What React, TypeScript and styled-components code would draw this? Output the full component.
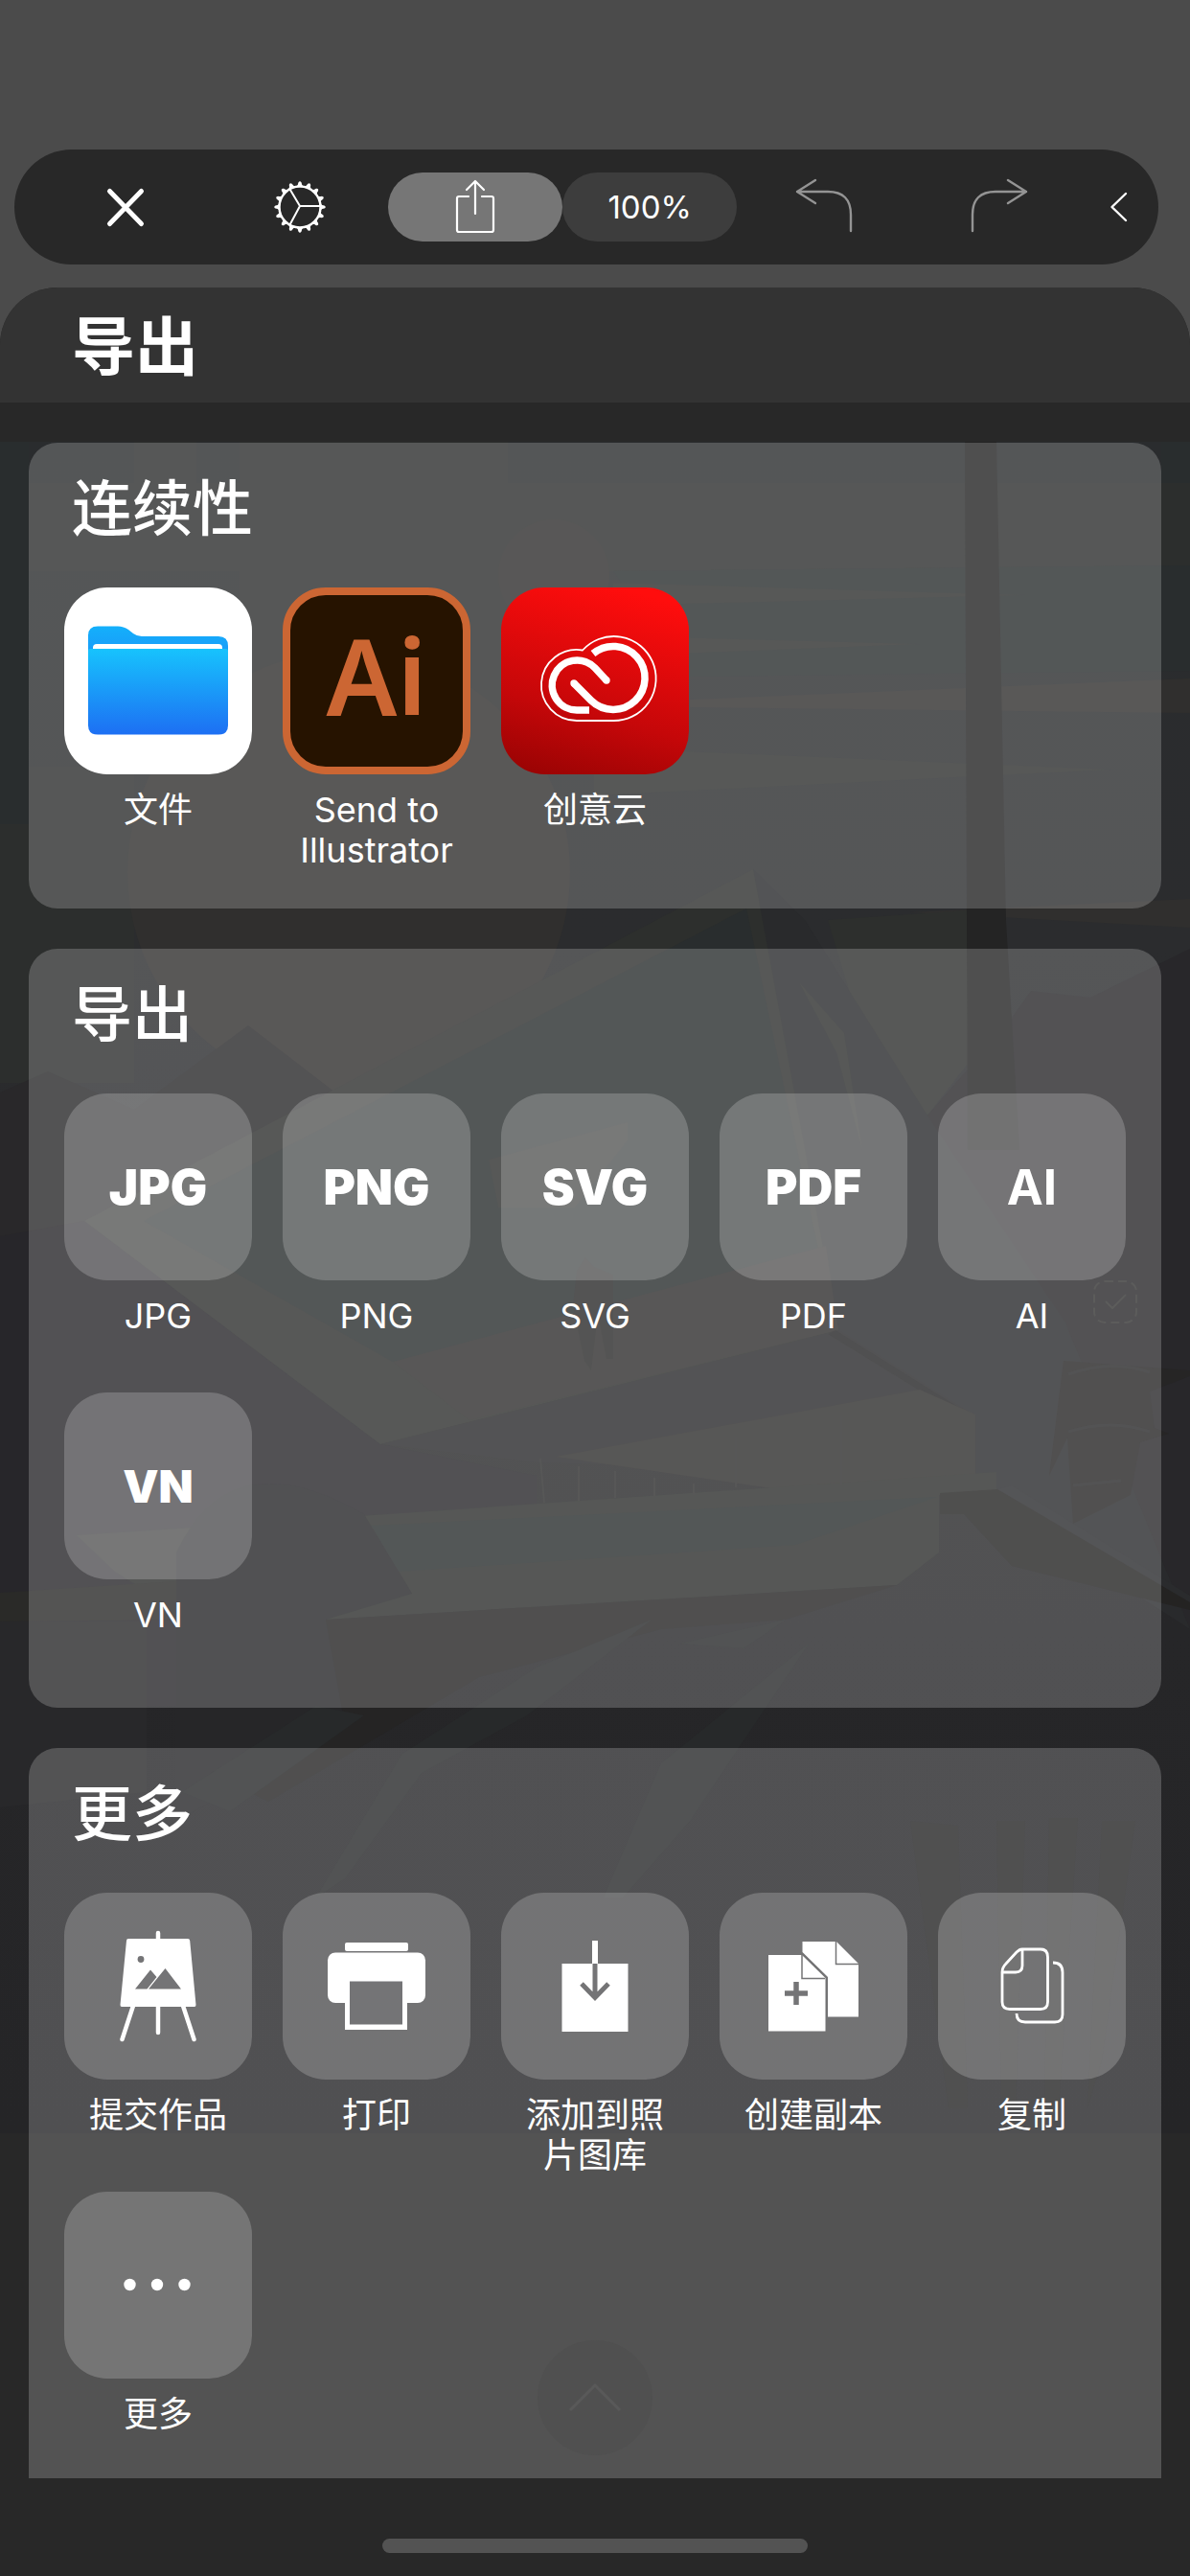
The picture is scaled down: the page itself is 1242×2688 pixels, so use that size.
import React from "react";
import styled, { createGlobalStyle } from "styled-components";

const GlobalStyle = createGlobalStyle`
  * { box-sizing: border-box; }
  body {
    margin: 0;
    background: #4b4b4b;
    color: #fff;
    font-family: Inter, "Noto Sans CJK SC", sans-serif;
  }
  button {
    margin: 0;
    padding: 0;
    border: 0;
    background: none;
    color: inherit;
    font: inherit;
    cursor: pointer;
  }
  h1, h2 { margin: 0; }
`;

const Page = styled.div`
  display: flex;
  flex-direction: column;
  height: 100vh;
  padding-top: 156px;
`;

const Toolbar = styled.header`
  display: grid;
  grid-template-columns: repeat(6, 1fr) 69px;
  align-items: center;
  flex: none;
  height: 120px;
  margin: 0 33px 24px 15px;
  padding: 0 6px 0 25px;
  border-radius: 60px;
  background: #282828;
`;

const ToolButton = styled.button<{ $fill?: string }>`
  display: flex;
  align-items: center;
  justify-content: center;
  height: 72px;
  border-radius: 36px;
  background: ${(p) => p.$fill ?? "transparent"};
  font-size: 33px;
`;

const Sheet = styled.main`
  display: flex;
  flex-direction: column;
  flex: 1;
  min-height: 0;
  overflow: hidden;
  border-radius: 60px 60px 0 0;
  background: #282828;
`;

const SheetHeader = styled.div`
  display: flex;
  align-items: center;
  flex: none;
  height: 120px;
  padding: 4px 75px 0;
  background: #333;
`;

const SheetTitle = styled.h1`
  font-size: 66px;
  line-height: 72px;
  font-weight: 700;
`;

const SheetBody = styled.div`
  position: relative;
  flex: 1;
  min-height: 0;
  overflow: hidden;
`;

const Backdrop = styled.svg`
  position: absolute;
  top: 41px;
  left: 0;
  width: 100%;
  height: auto;
`;

const Scroller = styled.div`
  position: relative;
  display: flex;
  flex-direction: column;
  gap: 42px;
  height: 100%;
  padding: 42px 30px;
  overflow-y: auto;
  scrollbar-width: none;
`;

const Card = styled.section<{ $bottom: number }>`
  flex: none;
  padding: 32px 37px ${(p) => p.$bottom}px;
  border-radius: 30px;
  background: rgba(255, 255, 255, 0.2);
`;

const CardTitle = styled.h2`
  margin: 0 8px 47px;
  font-size: 63px;
  line-height: 72px;
  font-weight: 500;
`;

const Grid = styled.div`
  display: grid;
  grid-template-columns: repeat(auto-fill, 196px);
  grid-auto-rows: 312px;
  column-gap: 32px;
  align-items: start;
`;

const Item = styled.button`
  display: flex;
  flex-direction: column;
  align-items: center;
  gap: 16px;
`;

const Tile = styled.span<{ $fill?: string; $edge?: string }>`
  display: flex;
  align-items: center;
  justify-content: center;
  width: 196px;
  height: 195px;
  overflow: hidden;
  border: ${(p) => (p.$edge ? `8px solid ${p.$edge}` : "0")};
  border-radius: 45px;
  background: ${(p) => p.$fill ?? "rgba(255, 255, 255, 0.2)"};
`;

const Label = styled.span`
  padding: 0 10px;
  font-size: 36px;
  line-height: 42px;
`;

const Format = styled.span<{ $weight: number; $size: number }>`
  font-size: ${(p) => p.$size}px;
  line-height: 60px;
  font-weight: ${(p) => p.$weight};
`;

const AppMark = styled.span`
  padding-bottom: 14px;
  color: #cc6633;
  font-family: "Noto Sans", sans-serif;
  font-size: 110px;
  line-height: 120px;
  font-weight: 600;
`;

const Footer = styled.footer`
  display: flex;
  justify-content: center;
  flex: none;
  height: 102px;
  padding-top: 63px;
`;

const HomeBar = styled.div`
  width: 444px;
  height: 15px;
  border-radius: 8px;
  background: #535353;
`;

/* ---------- toolbar icons ---------- */

const line = {
  fill: "none",
  stroke: "#fff",
  strokeLinecap: "round" as const,
  strokeLinejoin: "round" as const,
};

const CloseIcon = () => (
  <svg width="60" height="60" viewBox="0 0 60 60" {...line} strokeWidth="5">
    <path d="M13.500 13.500L46.500 47.500M46.500 13.500L13.500 47.500" />
  </svg>
);

const GearIcon = () => (
  <svg width="60" height="60" viewBox="-30 -30 60 60">
    {Array.from({ length: 16 }, (_, i) => (
      <path
        key={i}
        d="M-3.600 -21.500Q-1.800 -23 -1.600 -25.500Q0 -28 1.600 -25.500Q1.800 -23 3.600 -21.500Z"
        fill="#fff"
        transform={`rotate(${i * 22.5})`}
      />
    ))}
    <circle r="21.500" fill="none" stroke="#fff" strokeWidth="2.400" />
    <path d="M0 -1H21M0 -1L-11 -19.500M0 -1L-11 19.500" fill="none" stroke="#fff" strokeWidth="2" />
  </svg>
);

const ShareIcon = () => (
  <svg width="60" height="72" viewBox="0 0 60 72" {...line} strokeWidth="2.200">
    <path d="M23 25H13Q11 25 11 27V60Q11 62 13 62H47Q49 62 49 60V27Q49 25 47 25H37" />
    <path d="M30 43V9M21 18L30 9L39 18" />
  </svg>
);

const UndoIcon = ({ flip = false }: { flip?: boolean }) => (
  <svg width="60" height="60" viewBox="0 0 60 60" {...line} stroke="#949494" strokeWidth="2.400">
    <path
      d="M58 55V38Q58 14 34 14H2M21 2L2 14L21 26"
      transform={flip ? "translate(60 0) scale(-1 1)" : undefined}
    />
  </svg>
);

const BackIcon = () => (
  <svg width="30" height="40" viewBox="0 0 30 40" {...line} strokeWidth="2.400">
    <path d="M22 6L7.500 20L22 34" />
  </svg>
);

/* ---------- tile pictures, each on a 196 x 195 field ---------- */

const Picture = ({ children }: { children: React.ReactNode }) => (
  <svg width="196" height="195" viewBox="0 0 196 195" fill="#fff">
    {children}
  </svg>
);

const hole = "#747476";

const FolderPicture = () => (
  <Picture>
    <defs>
      <linearGradient id="folderBack" x1="0" y1="0" x2="0" y2="1">
        <stop offset="0" stopColor="#14b0fb" />
        <stop offset="1" stopColor="#1a96f8" />
      </linearGradient>
      <linearGradient id="folderFront" x1="0" y1="0" x2="0" y2="1">
        <stop offset="0" stopColor="#17c3fd" />
        <stop offset="1" stopColor="#1d6ff3" />
      </linearGradient>
    </defs>
    <path
      d="M25 75V50Q25 40.500 35 40.500H56Q62 40.500 67 44L72 48Q76 51 81 51H161Q171 51 171 61V75Z"
      fill="url(#folderBack)"
    />
    <path d="M30 66V63Q30 59 34 59H161Q165 59 165 63V66Z" />
    <path
      d="M25 66Q25 64 27 64H169Q171 64 171 66V144Q171 153.500 161 153.500H35Q25 153.500 25 144Z"
      fill="url(#folderFront)"
    />
  </Picture>
);

const CloudPicture = () => (
  <Picture>
    <g fill="none" stroke="#fff">
      <path d="M79 139A37 37 0 1 1 85 65.500A44 44 0 1 1 117 139Z" strokeWidth="1.800" />
      <path d="M96 69A33 33 0 1 1 94 118L76 100" strokeWidth="7.500" strokeLinejoin="round" />
      <path d="M110 97L98 84A26 26 0 1 0 79 128H92" strokeWidth="7.500" strokeLinejoin="round" />
    </g>
    <circle cx="76" cy="100" r="3.700" />
    <circle cx="110" cy="97" r="3.700" />
  </Picture>
);

const EaselPicture = () => (
  <Picture>
    <path d="M67 48H129Q131 48 131.200 50L137.500 117Q137.500 119 136 119H60Q58.500 119 58.500 117L65 50Q65 48 67 48Z" />
    <path
      d="M98 42V50M98 118V146M72 118L60.500 153M124 118L135.500 153"
      fill="none"
      stroke="#fff"
      strokeWidth="4.500"
      strokeLinecap="round"
    />
    <circle cx="80" cy="69.500" r="3.400" fill={hole} />
    <path d="M74 100.500L90 80.500L96.500 88L86.500 100.500ZM88 100.500L105.500 79L122 100.500Z" fill={hole} />
  </Picture>
);

const PrinterPicture = () => (
  <Picture>
    <rect x="65" y="52" width="66" height="9" rx="2" />
    <rect x="47" y="62.500" width="102" height="52.500" rx="8" />
    <rect x="65" y="90" width="65" height="53" />
    <rect x="70" y="92.500" width="55" height="45" fill={hole} />
  </Picture>
);

const AddPhotoPicture = () => (
  <Picture>
    <rect x="63.500" y="74" width="69" height="71" />
    <rect x="95" y="50" width="6" height="24" />
    <path d="M98 74V108M84 95L98 109.500L112 95" fill="none" stroke={hole} strokeWidth="5" />
  </Picture>
);

const DuplicatePicture = () => (
  <Picture>
    <path d="M86.500 51H122L145 74V129.500H113V88L86.500 62Z" />
    <path d="M121.500 51V74.500H145" fill="none" stroke={hole} strokeWidth="1.500" />
    <path d="M51 65H86L110.500 89V144.500H51Z" />
    <path d="M86 65V89.500H110" fill="none" stroke={hole} strokeWidth="1.500" />
    <path d="M80 93V117M68 105H92" fill="none" stroke={hole} strokeWidth="5.500" />
  </Picture>
);

const CopyPicture = () => (
  <Picture>
    <g fill="none" stroke="#fff" strokeWidth="2.800">
      <path d="M88 59H107Q114.500 59 114.500 67V114Q114.500 121.500 107 121.500H75Q67 121.500 67 114V83Q67 78 71 74L82 62Q85 59 88 59Z" />
      <path d="M88 59V76Q88 83 81 83H67" />
      <path d="M120 73Q130 73 130 83V127Q130 135 122 135H91Q82 135 82 126" />
    </g>
  </Picture>
);

const MorePicture = () => (
  <Picture>
    <circle cx="68.500" cy="97" r="6.200" />
    <circle cx="97" cy="97" r="6.200" />
    <circle cx="125.500" cy="97" r="6.200" />
  </Picture>
);

/* Dimmed canvas that shows through the sheet. */
const Artwork = () => (
  <Backdrop viewBox="0 461 1242 2125" aria-hidden="true">
    <defs>
      <linearGradient id="sky" x1="0" y1="0" x2="0" y2="1">
        <stop offset="0" stopColor="#2a2c2e" />
        <stop offset="0.300" stopColor="#2b2c2e" />
        <stop offset="0.700" stopColor="#262628" />
        <stop offset="1" stopColor="#252527" />
      </linearGradient>
    </defs>
    <rect y="461" width="1242" height="1765" fill="url(#sky)" />
    <path d="M140 461H205V504H140ZM250 461H530V800H250ZM635 504H1242V590L635 596ZM0 504H635V596H0ZM0 800H140V1130H0Z" fill="#2c2e2d" />
    <path d="M0 461H30V860H0ZM640 596L1242 590V700L720 706ZM1212 461H1242V504H1212Z" fill="#292d2e" />
    <path d="M640 608L1070 621L640 632ZM660 664L960 672L660 684ZM620 780L1160 803L620 830Z" fill="#2d2f2d" />
    <path d="M720 730L1242 708V744L720 738ZM950 952L1242 938V968Z" fill="#302f2e" />
    <circle cx="578" cy="600" r="58" fill="#2f2e2d" />
    <circle cx="364" cy="910" r="231" fill="#302f2e" />
    <path d="M864 960L1010 950V1110L968 1164L900 1080Z" fill="#2d2f2d" />
    <path d="M0 1140L50 1118L140 1158L259 1070L350 1140L300 1400L0 1640Z" fill="#29282a" />
    <path d="M0 1290L88 1274L397 1507L560 1540V1600L380 1780H0Z" fill="#27262a" />
    <path d="M968 1164L1010 1116L1056 1062L1076 1034L1138 1041L1242 990V1700L1112 1520Z" fill="#28272a" />
    <path d="M1007 461H1040L1050 961L1064 1200H1010Z" fill="#242424" />
    <path d="M786 907L840 960L968 1164L1112 1380L1242 1700L900 1480L870 1390Z" fill="#292a2c" />
    <path d="M88 1274L786 907L875 1388L397 1507Z" fill="#2d2f2d" />
    <path d="M150 1274L779 948L862 1342L410 1421Z" fill="#292d2e" />
    <path d="M410 1421L862 1300L875 1388L490 1482Z" fill="#2f2e2d" />
    <path d="M510 1210L655 1171V1190L600 1260H520Z" fill="#2d2f2d" />
    <path d="M834 1025L881 1078L900 1200L873 1098Z" fill="#2d2f2d" />
    <path d="M611 1312L620 1322L640 1330V1418H633L624 1370L617 1430L610 1420L598 1362L602 1326Z" fill="#2a2a2a" />
    <path d="M397 1507L875 1388L1019 1478V1540L560 1526Z" fill="#29292b" />
    <path d="M872 1388L1016 1478L1010 1482L864 1392Z" fill="#252526" />
    <path d="M580 1520L960 1450L1018 1476V1545L805 1553Z" fill="#2e2d2c" />
    <path d="M375 1582L1040 1536V1556L980 1560V1620L936 1654L340 1690L388 1662L430 1663L410 1630Z" fill="#2c2e2c" />
    <path d="M388 1592L978 1562L830 1612L414 1640Z" fill="#292d2e" />
    <path d="M564 1522L568 1568M604 1530V1566M642 1535V1563M683 1542V1561M724 1548V1560M768 1500V1552M878 1478V1550" stroke="#2d2e2d" strokeWidth="2" />
    <path d="M981 1558L1041 1554L1242 1665V1680L1056 1634L1006 1580H981Z" fill="#242322" />
    <path d="M1041 1554L1056 1550L1242 1665V1672Z" fill="#2a2b2d" />
    <path d="M80 1602L202 1594L184 1640V1680L120 1640Z" fill="#2b2c2b" />
    <path d="M0 1662L185 1650V1690L0 1692Z" fill="#2a2a28" />
    <path d="M184 1620Q240 1500 380 1580L430 1663L340 1690L460 1750L184 1900Z" fill="#262628" />
    <path d="M340 1690L936 1654L820 1690L690 1700L500 1750L280 1880L220 1850L360 1800Z" fill="#252424" />
    <path d="M0 1692H153V1870L0 1886Z" fill="#28282a" />
    <path d="M330 1980L420 1830L560 1740L680 1690L550 1790L440 1850L360 1960ZM630 1980L690 1840L844 1715L720 1900L650 1980ZM190 1870L330 1780L380 1790L240 1890ZM710 1715L820 1690L776 1720Z" fill="#27292a" />
    <path d="M1110 1420L1242 1430V1436L1200 1452L1205 1490L1220 1496L1190 1505L1180 1560L1120 1590L1114 1500L1095 1540Z" fill="#262525" />
    <path d="M1115 1434Q1160 1418 1200 1432M1115 1494Q1160 1480 1200 1494M1120 1550L1170 1545" fill="none" stroke="#29292a" strokeWidth="3" />
    <path d="M950 1900L1000 1905L1010 2200H990ZM1040 1900H1070L1060 2200H1045ZM1095 1897H1125L1105 2200H1090ZM1150 1900H1185L1150 2150L1135 2200Z" fill="#252525" />
    <rect x="1142" y="1337" width="44" height="43" rx="11" fill="none" stroke="#343433" strokeWidth="2" strokeDasharray="9 5" />
    <path d="M1154 1358L1161 1365L1175 1351" fill="none" stroke="#343433" strokeWidth="2" />
    <rect y="2226" width="1242" height="360" fill="#282828" />
    <circle cx="621" cy="2502" r="60" fill="#252525" />
    <path d="M595 2515L621 2489L647 2515" fill="none" stroke="#303030" strokeWidth="3" />
  </Backdrop>
);

const formats = [
  { name: "JPG", size: 51, weight: 900 },
  { name: "PNG", size: 51, weight: 900 },
  { name: "SVG", size: 51, weight: 900 },
  { name: "PDF", size: 51, weight: 900 },
  { name: "AI", size: 51, weight: 700 },
  { name: "VN", size: 47, weight: 900 },
];

export default function App() {
  return (
    <>
      <GlobalStyle />
      <Page>
        <Toolbar>
          <ToolButton aria-label="关闭"><CloseIcon /></ToolButton>
          <ToolButton aria-label="设置"><GearIcon /></ToolButton>
          <ToolButton aria-label="导出" $fill="#767676"><ShareIcon /></ToolButton>
          <ToolButton $fill="#3d3d3d">100%</ToolButton>
          <ToolButton aria-label="撤销"><UndoIcon /></ToolButton>
          <ToolButton aria-label="重做"><UndoIcon flip /></ToolButton>
          <ToolButton aria-label="收起"><BackIcon /></ToolButton>
        </Toolbar>
        <Sheet>
          <SheetHeader>
            <SheetTitle>导出</SheetTitle>
          </SheetHeader>
          <SheetBody>
            <Artwork />
            <Scroller>
              <Card $bottom={23}>
                <CardTitle>连续性</CardTitle>
                <Grid>
                  <Item>
                    <Tile $fill="#fff"><FolderPicture /></Tile>
                    <Label>文件</Label>
                  </Item>
                  <Item>
                    <Tile $fill="#261300" $edge="#cc6633"><AppMark>Ai</AppMark></Tile>
                    <Label>Send to Illustrator</Label>
                  </Item>
                  <Item>
                    <Tile $fill="linear-gradient(195deg, #ff0d0d 8%, #c50709 65%, #950303 100%)"><CloudPicture /></Tile>
                    <Label>创意云</Label>
                  </Item>
                </Grid>
              </Card>
              <Card $bottom={17}>
                <CardTitle>导出</CardTitle>
                <Grid>
                  {formats.map(({ name, size, weight }) => (
                    <Item key={name}>
                      <Tile><Format $size={size} $weight={weight}>{name}</Format></Tile>
                      <Label>{name}</Label>
                    </Item>
                  ))}
                </Grid>
              </Card>
              <Card $bottom={17}>
                <CardTitle>更多</CardTitle>
                <Grid>
                  <Item><Tile><EaselPicture /></Tile><Label>提交作品</Label></Item>
                  <Item><Tile><PrinterPicture /></Tile><Label>打印</Label></Item>
                  <Item><Tile><AddPhotoPicture /></Tile><Label>添加到照片图库</Label></Item>
                  <Item><Tile><DuplicatePicture /></Tile><Label>创建副本</Label></Item>
                  <Item><Tile><CopyPicture /></Tile><Label>复制</Label></Item>
                  <Item><Tile><MorePicture /></Tile><Label>更多</Label></Item>
                </Grid>
              </Card>
            </Scroller>
          </SheetBody>
          <Footer><HomeBar /></Footer>
        </Sheet>
      </Page>
    </>
  );
}
